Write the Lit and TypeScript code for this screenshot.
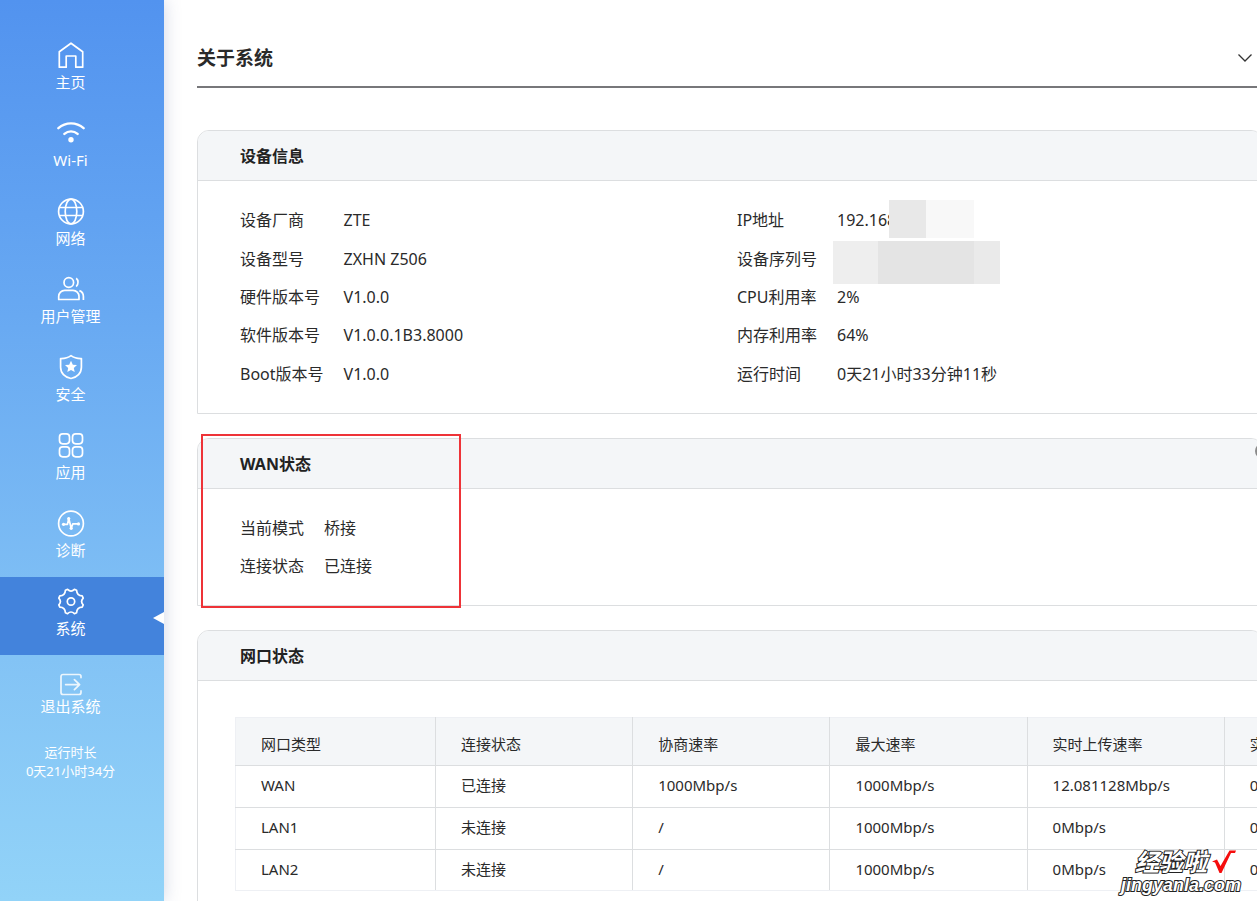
import { LitElement, html, css, svg, TemplateResult } from "lit";
import { customElement, property } from "lit/decorators.js";
import { classMap } from "lit/directives/class-map.js";

type IconName =
  | "home" | "wifi" | "globe" | "users" | "shield" | "apps" | "pulse" | "gear" | "exit";

const icons: Record<IconName, TemplateResult> = {
  home: svg`<path d="M2.300 9.800 14 1.200l11.700 8.600v15.400h-6.900V14H9.200v11.200H2.300z"/>`,
  wifi: svg`<path stroke-width="2.400" stroke-linecap="round" d="M1.400 8.200c7.400-6.400 17.800-6.400 25.200 0M7.400 13.900c3.900-3.400 9.300-3.400 13.200 0"/><circle class="solid" cx="14" cy="19.800" r="2.700"/>`,
  globe: svg`<circle cx="14" cy="13.500" r="12.400"/><ellipse cx="14" cy="13.500" rx="5.800" ry="12.400"/><path d="M2.400 9.500h23.200M2.400 17.500h23.200"/>`,
  users: svg`<circle cx="11.800" cy="6.500" r="4.800"/><path d="M1.700 23.500v-3.200a6 6 0 0 1 6-6H16a6 6 0 0 1 6 6v3.200zM19.200 2.200c2.400 1.800 2.400 6.400 0 8.400M22.400 14.600c2.400 1 4 3 4 5.800V24"/>`,
  shield: svg`<path d="M14 1.700c3 2.300 6.500 3 10.400 2.900v8.700c0 5.800-4.200 10.200-10.400 11.200C7.800 23.500 3.600 19.100 3.600 13.300V4.600C7.500 4.700 11 4 14 1.700z"/><path class="solid" d="m14 6.800 1.800 3.900 4.200.4-3.200 2.800.9 4.200-3.700-2.200-3.700 2.200.9-4.200L8 11.100l4.200-.4z"/>`,
  apps: svg`<rect x="2.500" y="1.800" width="10" height="10" rx="3.200"/><rect x="15.500" y="1.800" width="10" height="10" rx="3.200"/><rect x="2.500" y="14.800" width="10" height="10" rx="3.200"/><rect x="15.500" y="14.800" width="10" height="10" rx="3.200"/>`,
  pulse: svg`<circle cx="14" cy="13.500" r="12.400"/><path d="M6.500 14.300h4l1.200-6 2.500 10 1.600-4.400h5.800"/><circle class="solid" cx="6.500" cy="14.300" r="1.600"/><circle class="solid" cx="11.700" cy="8.500" r="1.600"/><circle class="solid" cx="14.200" cy="18.300" r="1.600"/><circle class="solid" cx="21.500" cy="13.900" r="1.600"/>`,
  gear: svg`<path d="M8.400 2.300 10.600 1.400Q14 4.800 17.400 1.400L19.600 2.300Q19.800 7.700 25.200 7.900L26.200 10.100Q23 13.500 26.200 16.900L25.200 19.100Q19.800 19.300 19.600 24.700L17.400 25.700Q14 22.300 10.600 25.700L8.400 24.700Q8.200 19.300 2.800 19.100L1.800 16.900Q5 13.500 1.800 10.100L2.800 7.900Q8.200 7.700 8.400 2.300z"/><circle cx="14" cy="13.500" r="3.700"/>`,
  exit: svg`<path stroke-linecap="round" d="M24 6.600V5.500a2 2 0 0 0-2-2H6a2 2 0 0 0-2 2v16a2 2 0 0 0 2 2h16a2 2 0 0 0 2-2v-1.600M8.600 13.600H22.600M17.400 8.600l5.200 5-5.200 5"/>`,
};

const menu: { icon: IconName; label: string; active?: boolean }[] = [
  { icon: "home", label: "主页" },
  { icon: "wifi", label: "Wi-Fi" },
  { icon: "globe", label: "网络" },
  { icon: "users", label: "用户管理" },
  { icon: "shield", label: "安全" },
  { icon: "apps", label: "应用" },
  { icon: "pulse", label: "诊断" },
  { icon: "gear", label: "系统", active: true },
  { icon: "exit", label: "退出系统" },
];

@customElement("side-nav")
class SideNav extends LitElement {
  static styles = css`
    :host {
      display: block;
      flex: none;
      box-sizing: border-box;
      width: 164px;
      padding-top: 31px;
      color: #fff;
      background: linear-gradient(#5293ef, #68a9f2 35%, #83c3f5 73%, #92d3f8);
      box-shadow: 0 0 16px rgba(70, 90, 150, 0.25);
    }
    .item {
      position: relative;
      display: flex;
      flex-direction: column;
      align-items: center;
      box-sizing: border-box;
      height: 78px;
      padding: 11px 23px 0 0;
      color: inherit;
      font-size: 15px;
      line-height: 24px;
      text-decoration: none;
    }
    .active {
      background: #4383dc;
    }
    .active::after {
      content: "";
      position: absolute;
      right: 0;
      top: 35px;
      border: solid transparent;
      border-width: 6px 11px 6px 0;
      border-right-color: #fff;
    }
    .icon {
      width: 28px;
      height: 28px;
      fill: none;
      stroke: #fff;
      stroke-width: 1.7;
      stroke-linejoin: round;
    }
    .solid {
      fill: #fff;
      stroke: none;
    }
    .exit .icon {
      margin-top: 5px;
      margin-bottom: -5px;
      opacity: 0.85;
    }
    .uptime {
      margin: 10px 0 0;
      padding-right: 23px;
      font-size: 13px;
      line-height: 19px;
      text-align: center;
    }
    .line {
      display: block;
    }
  `;

  render() {
    return html`
      <nav>
        ${menu.map(
          (m) => html`<a
            href="#"
            class=${classMap({ item: true, active: !!m.active, exit: m.icon === "exit" })}
          >
            <svg class="icon" viewBox="0 0 28 28" aria-hidden="true">${icons[m.icon]}</svg>
            <span>${m.label}</span>
          </a>`
        )}
      </nav>
      <p class="uptime"><span class="line">运行时长</span><span class="line">0天21小时34分</span></p>
    `;
  }
}

@customElement("info-card")
class InfoCard extends LitElement {
  @property() heading = "";

  static styles = css`
    :host {
      display: block;
      flex: none;
      border: 1px solid #dcdee0;
      border-radius: 12px 12px 0 0;
      background: #fff;
    }
    .head {
      display: flex;
      align-items: center;
      height: 49px;
      padding: 0 42px;
      border-bottom: 1px solid #dcdee0;
      border-radius: 11px 11px 0 0;
      background: #f4f6f8;
    }
    .title {
      margin: 0;
      font-size: 16px;
      line-height: 24px;
      color: #222;
    }
  `;

  render() {
    return html`
      <div class="head"><h2 class="title">${this.heading}</h2></div>
      <slot></slot>
    `;
  }
}

const deviceInfo = [
  ["设备厂商", "ZTE"],
  ["设备型号", "ZXHN Z506"],
  ["硬件版本号", "V1.0.0"],
  ["软件版本号", "V1.0.0.1B3.8000"],
  ["Boot版本号", "V1.0.0"],
];

const columns = ["网口类型", "连接状态", "协商速率", "最大速率", "实时上传速率", "实时下载速率"];
const ports = [
  ["WAN", "已连接", "1000Mbp/s", "1000Mbp/s", "12.081128Mbp/s", "0Mbp/s"],
  ["LAN1", "未连接", "/", "1000Mbp/s", "0Mbp/s", "0Mbp/s"],
  ["LAN2", "未连接", "/", "1000Mbp/s", "0Mbp/s", "0Mbp/s"],
];

@customElement("app-root")
class AppRoot extends LitElement {
  static styles = css`
    :host {
      position: relative;
      display: flex;
      height: 100vh;
      overflow: hidden;
      background: #fff;
      color: #2a2a2a;
      font-family: "Noto Sans", "Noto Sans CJK SC", sans-serif;
      font-size: 16px;
    }
    .main {
      flex: 1;
      min-width: 0;
      display: flex;
      flex-direction: column;
      gap: 24px;
      margin-right: -6px;
      padding-left: 33px;
    }
    .top {
      display: flex;
      flex: none;
      align-items: center;
      justify-content: space-between;
      margin-bottom: 18px;
      padding: 30px 10px 0 0;
      height: 56px;
      border-bottom: 2px solid #77777a;
    }
    .page-title {
      margin: 0;
      font-size: 19px;
      line-height: 28px;
    }
    .toggle,
    .help {
      display: flex;
      padding: 0;
      border: 0;
      background: none;
    }
    .chevron {
      width: 16px;
      height: 16px;
      fill: none;
      stroke: #333;
      stroke-width: 1.3;
    }
    .columns {
      display: grid;
      grid-template-columns: 1fr 1fr;
      padding: 20px 28px 20px 42px;
    }
    .list {
      display: grid;
      grid-template-columns: max-content 1fr;
      grid-auto-rows: 1fr;
      align-items: center;
      column-gap: 20px;
      margin: 0;
      line-height: 38px;
    }
    .device {
      min-height: 192px;
    }
    .value {
      position: relative;
      margin: 0;
      min-height: 38px;
    }
    .mask {
      position: absolute;
      top: -1px;
      left: 52px;
      width: 85px;
      height: 38px;
      background: linear-gradient(90deg, #e8e8e8 37px, #f8f8f8 37px);
    }
    .mask-wide {
      top: 1px;
      left: -4px;
      width: 167px;
      height: 43px;
      background: linear-gradient(90deg, #eee 45px, #e4e4e4 45px 141px, #eaeaea 141px);
    }
    .wan {
      position: relative;
    }
    .highlight {
      position: absolute;
      top: -5px;
      left: 3px;
      width: 256px;
      height: 170px;
      border: 2px solid #ee3338;
    }
    .help {
      position: absolute;
      top: 4px;
      right: -9px;
      width: 16px;
      height: 16px;
    }
    .help-icon {
      width: 16px;
      height: 16px;
      fill: none;
      stroke: #8a8a8a;
      stroke-width: 2;
    }
    .scroller {
      overflow: hidden;
      padding: 36px 0 36px 37px;
    }
    .ports {
      width: 1187px;
      table-layout: fixed;
      border-collapse: collapse;
      border: 1px solid #eef0f4;
      font-size: 15px;
      line-height: 22px;
      text-align: left;
    }
    .cell {
      box-sizing: border-box;
      height: 42px;
      padding: 0 25px 3px;
      border: 1px solid #dcdee0;
      font-weight: 400;
    }
    .th {
      height: 48px;
      padding: 4px 25px 0;
      background: #f4f6f8;
      border-top-color: #eef0f4;
    }
    .cell:first-child {
      width: 200px;
      border-left-color: #eef0f4;
    }
    .row:last-child .cell {
      height: 41px;
      border-bottom-color: #eef0f4;
    }
    .brand {
      position: absolute;
      right: 16px;
      bottom: 6px;
      display: grid;
      justify-items: end;
      color: #fff;
      font-style: italic;
      font-weight: 700;
      -webkit-text-stroke: 2px #222;
      paint-order: stroke fill;
    }
    .brand-top {
      display: flex;
      align-items: center;
      gap: 5px;
      margin-right: 5px;
      font-size: 24px;
      line-height: 26px;
    }
    .brand-site {
      font-family: "Liberation Sans", sans-serif;
      font-size: 18px;
      line-height: 20px;
    }
    .tick {
      width: 24px;
      height: 26px;
      fill: #f50d0d;
    }
  `;

  private list(rows: string[][], extra = "") {
    return html`<dl class="list ${extra}">
      ${rows.map(([k, v]) => html`<dt>${k}</dt><dd class="value">${v}</dd>`)}
    </dl>`;
  }

  render() {
    return html`
      <side-nav></side-nav>
      <main class="main">
        <header class="top">
          <h1 class="page-title">关于系统</h1>
          <button class="toggle" aria-label="展开">
            <svg class="chevron" viewBox="0 0 16 16"><path d="m1.500 4.500 6.500 6.500 6.500-6.500" /></svg>
          </button>
        </header>

        <info-card heading="设备信息">
          <div class="columns">
            ${this.list(deviceInfo, "device")}
            <dl class="list device">
              <dt>IP地址</dt>
              <dd class="value">192.168<span class="mask"></span></dd>
              <dt>设备序列号</dt>
              <dd class="value"><span class="mask mask-wide"></span></dd>
              <dt>CPU利用率</dt>
              <dd class="value">2%</dd>
              <dt>内存利用率</dt>
              <dd class="value">64%</dd>
              <dt>运行时间</dt>
              <dd class="value">0天21小时33分钟11秒</dd>
            </dl>
          </div>
        </info-card>

        <info-card class="wan" heading="WAN状态">
          <div class="columns">
            ${this.list([["当前模式", "桥接"], ["连接状态", "已连接"]])}
          </div>
          <button class="help" aria-label="帮助">
            <svg class="help-icon" viewBox="0 0 16 16"><circle cx="8" cy="8" r="7" /></svg>
          </button>
          <div class="highlight"></div>
        </info-card>

        <info-card heading="网口状态">
          <div class="scroller">
            <table class="ports">
              <thead>
                <tr>${columns.map((c) => html`<th class="cell th" scope="col">${c}</th>`)}</tr>
              </thead>
              <tbody>
                ${ports.map(
                  (r) => html`<tr class="row">${r.map((c) => html`<td class="cell">${c}</td>`)}</tr>`
                )}
              </tbody>
            </table>
          </div>
        </info-card>
      </main>
      <div class="brand">
        <div class="brand-top">
          <span>经验啦</span>
          <svg class="tick" viewBox="0 0 24 26" aria-hidden="true">
            <path d="M0 12.500 5 10.500 8.500 17 17.500 1.500H24L23 4H19L9.500 24H7.500L3 13.500z" />
          </svg>
        </div>
        <span class="brand-site">jingyanla.com</span>
      </div>
    `;
  }
}
